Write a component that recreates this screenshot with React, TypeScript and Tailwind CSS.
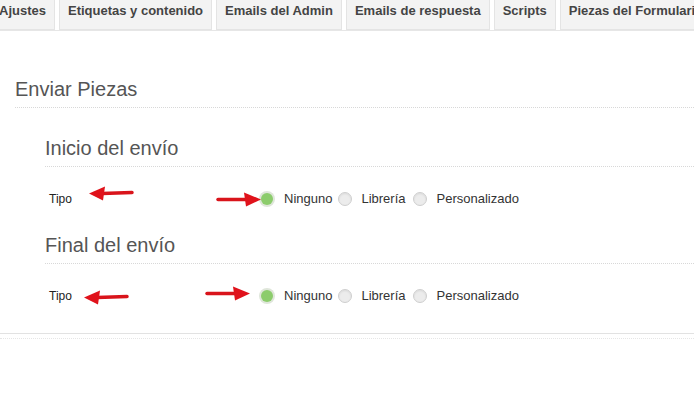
import React from "react";

const tabs = ["Ajustes", "Etiquetas y contenido", "Emails del Admin", "Emails de respuesta", "Scripts", "Piezas del Formulario"];

function Radio({ checked }: { checked?: boolean }) {
  return checked ? (
    <span className="inline-flex h-[16px] w-[16px] items-center justify-center rounded-full bg-[#dfe6da]">
      <span className="h-[12px] w-[12px] rounded-full bg-[#8ccc6c]" />
    </span>
  ) : (
    <span className="inline-block h-[14px] w-[14px] rounded-full border border-[#cfcfcf] bg-[#ececec] shadow-[inset_0_1px_2px_rgba(0,0,0,0.08)]" />
  );
}

function Arrow({ dir, className }: { dir: "left" | "right"; className: string }) {
  return (
    <svg className={"absolute " + className} width="46" height="15" viewBox="0 0 46 15">
      {dir === "left" ? (
        <g>
          <path d="M14 7.5 L44 6.5" stroke="#d9141b" strokeWidth="3.5" strokeLinecap="round" />
          <path d="M1 7.5 L17 0.5 L15 14.5 Z" fill="#e0121b" />
        </g>
      ) : (
        <g>
          <path d="M2 7.5 L32 7.5" stroke="#d9141b" strokeWidth="3.5" strokeLinecap="round" />
          <path d="M45 7.5 L28 0.5 L30 14.5 Z" fill="#e0121b" />
        </g>
      )}
    </svg>
  );
}

function Row({ leftArrow, rightArrow }: { leftArrow: string; rightArrow: string }) {
  return (
    <div className="relative flex h-[64px] items-center">
      <div className="w-[214px] pl-[4px] text-[12px] text-[#222]">Tipo</div>
      <div className="flex items-center text-[13px] text-[#333]">
        <Radio checked />
        <span className="ml-[9px] mr-[6px]">Ninguno</span>
        <Radio />
        <span className="ml-[9px] mr-[7px]">Librería</span>
        <Radio />
        <span className="ml-[10px]">Personalizado</span>
      </div>
      <Arrow dir="left" className={leftArrow} />
      <Arrow dir="right" className={rightArrow} />
    </div>
  );
}

export default function App() {
  return (
    <div className="h-[403px] w-[694px] overflow-hidden bg-white font-['Liberation_Sans',Arial,sans-serif]">
      <div className="flex h-[31px] border-b border-[#e6e6e6]">
        <div className="ml-[-10px] flex whitespace-nowrap">
          {tabs.map((t) => (
            <div
              key={t}
              className="mr-[4px] flex h-[30px] items-start border border-t-0 border-[#e4e4e4] bg-[#f3f3f3] px-[8px] pt-[3px] text-[13px] leading-[16px] font-bold text-[#444]"
            >
              {t}
            </div>
          ))}
        </div>
      </div>
      <div className="pl-[15px] pt-[46px]">
        <div className="border-b border-dotted border-[#d8d8d8] pb-[6px] text-[20px] leading-[24px] text-[#555]">
          Enviar Piezas
        </div>
        <div className="pl-[30px] pt-[28px]">
          <div className="border-b border-dotted border-[#d8d8d8] pb-[6px] text-[20px] leading-[24px] text-[#555]">
            Inicio del envío
          </div>
          <Row leftArrow="left-[43px] top-[19px]" rightArrow="left-[171px] top-[25px]" />
          <div className="border-b border-dotted border-[#d8d8d8] pb-[6px] pt-[2px] text-[20px] leading-[24px] text-[#555]">
            Final del envío
          </div>
          <Row leftArrow="left-[38px] top-[26px]" rightArrow="left-[160px] top-[22px]" />
        </div>
      </div>
      <div className="mt-[5px] border-t border-[#e2e2e2]" />
      <div className="mt-[4px] border-t border-dotted border-[#e6e6e6]" />
    </div>
  );
}
